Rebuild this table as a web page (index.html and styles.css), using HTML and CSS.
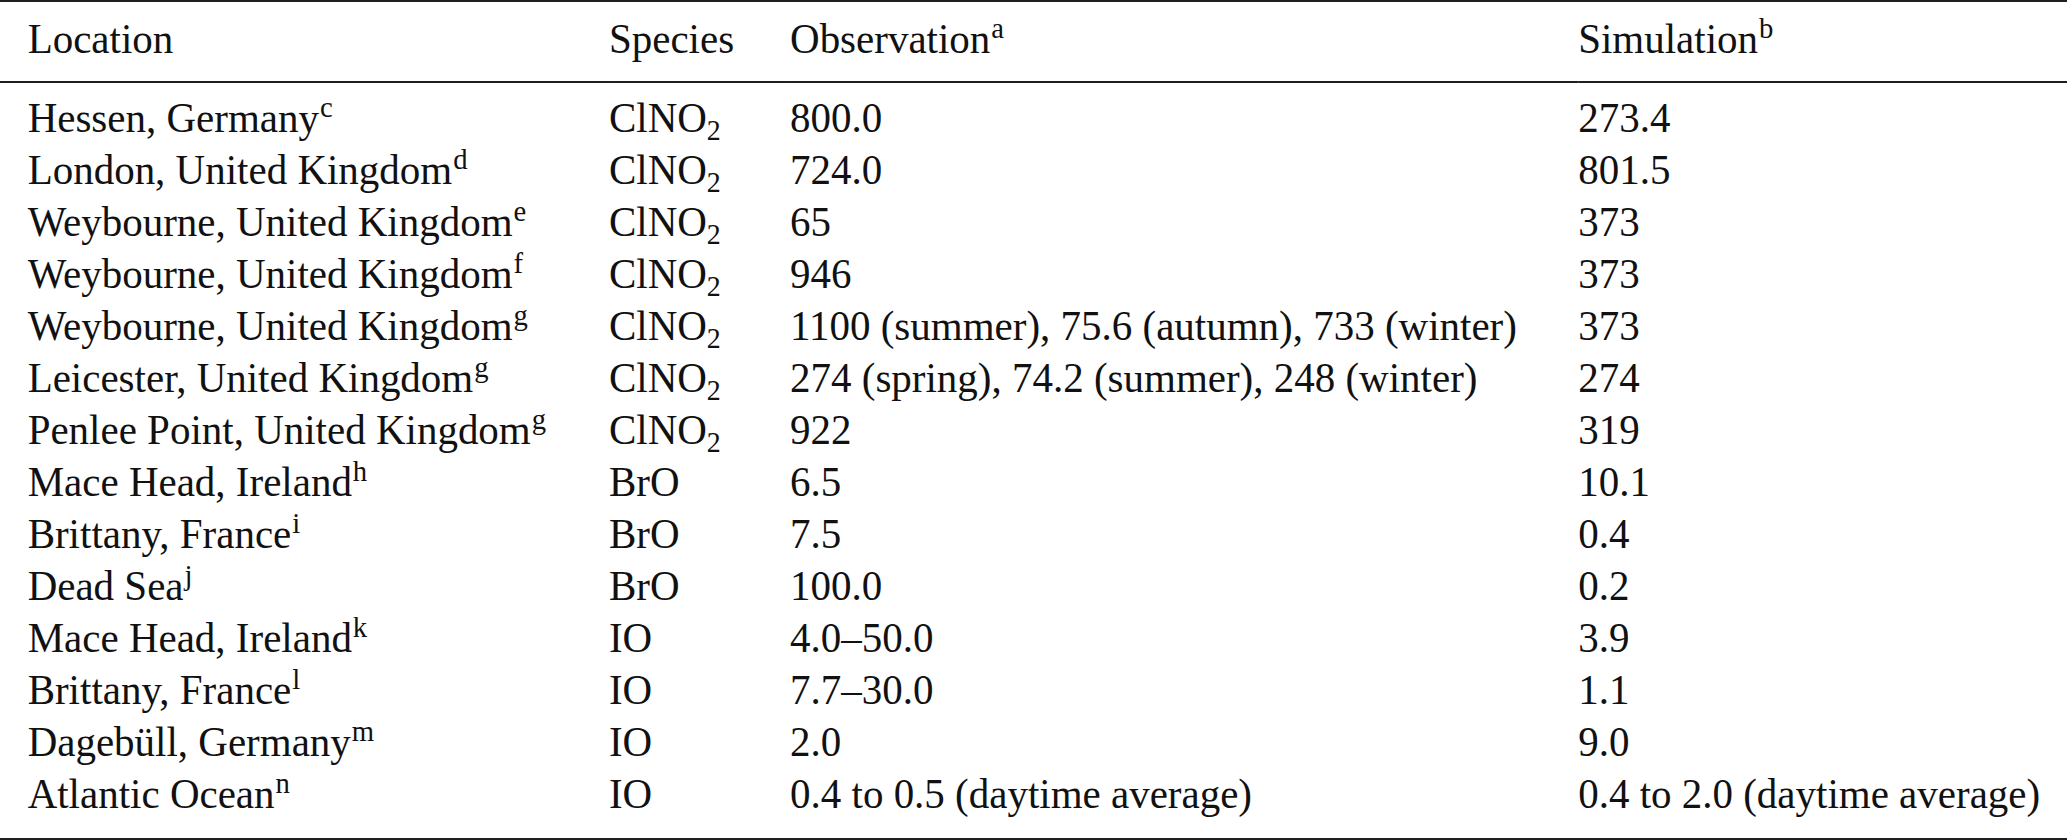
FILE: index.html
```html
<!DOCTYPE html>
<html lang="en">
<head>
<meta charset="utf-8">
<title>Halogen species observations and simulations</title>
<link rel="stylesheet" href="styles.css">
</head>
<body>
<div class="table-wrap">
<table class="data-table">
  <colgroup>
    <col class="col-location">
    <col class="col-species">
    <col class="col-observation">
    <col class="col-simulation">
  </colgroup>
  <thead>
    <tr>
      <th>Location</th>
      <th>Species</th>
      <th>Observation<span class="sup">a</span></th>
      <th>Simulation<span class="sup">b</span></th>
    </tr>
  </thead>
  <tbody>
    <tr class="first-row"><td>Hessen, Germany<span class="sup">c</span></td><td>ClNO<span class="sub">2</span></td><td>800.0</td><td>273.4</td></tr>
    <tr><td>London, United Kingdom<span class="sup">d</span></td><td>ClNO<span class="sub">2</span></td><td>724.0</td><td>801.5</td></tr>
    <tr><td>Weybourne, United Kingdom<span class="sup">e</span></td><td>ClNO<span class="sub">2</span></td><td>65</td><td>373</td></tr>
    <tr><td>Weybourne, United Kingdom<span class="sup">f</span></td><td>ClNO<span class="sub">2</span></td><td>946</td><td>373</td></tr>
    <tr><td>Weybourne, United Kingdom<span class="sup">g</span></td><td>ClNO<span class="sub">2</span></td><td>1100 (summer), 75.6 (autumn), 733 (winter)</td><td>373</td></tr>
    <tr><td>Leicester, United Kingdom<span class="sup">g</span></td><td>ClNO<span class="sub">2</span></td><td>274 (spring), 74.2 (summer), 248 (winter)</td><td>274</td></tr>
    <tr><td>Penlee Point, United Kingdom<span class="sup">g</span></td><td>ClNO<span class="sub">2</span></td><td>922</td><td>319</td></tr>
    <tr><td>Mace Head, Ireland<span class="sup">h</span></td><td>BrO</td><td>6.5</td><td>10.1</td></tr>
    <tr><td>Brittany, France<span class="sup">i</span></td><td>BrO</td><td>7.5</td><td>0.4</td></tr>
    <tr><td>Dead Sea<span class="sup">j</span></td><td>BrO</td><td>100.0</td><td>0.2</td></tr>
    <tr><td>Mace Head, Ireland<span class="sup">k</span></td><td>IO</td><td>4.0–50.0</td><td>3.9</td></tr>
    <tr><td>Brittany, France<span class="sup">l</span></td><td>IO</td><td>7.7–30.0</td><td>1.1</td></tr>
    <tr><td>Dagebüll, Germany<span class="sup">m</span></td><td>IO</td><td>2.0</td><td>9.0</td></tr>
    <tr class="last-row"><td>Atlantic Ocean<span class="sup">n</span></td><td>IO</td><td>0.4 to 0.5 (daytime average)</td><td>0.4 to 2.0 (daytime average)</td></tr>
  </tbody>
</table>
</div>
</body>
</html>
```

FILE: styles.css
```css
html, body {
  margin: 0;
  padding: 0;
  background: #ffffff;
}

body {
  font-family: "Liberation Serif", "Times New Roman", serif;
  font-size: 43px;
  line-height: 52px;
  color: #111111;
  overflow: hidden;
}

/* The source typeface is slightly condensed relative to Times;
   the whole table is narrowed horizontally to match it. */
.table-wrap {
  width: 100%;
  overflow: hidden;
}

.data-table {
  width: 2169px;
  table-layout: fixed;
  border-collapse: separate;
  border-spacing: 0;
  border-top: 2px solid #1e1e1e;
  border-bottom: 2px solid #1e1e1e;
  transform: scaleX(0.953);
  transform-origin: 0 0;
}

.col-location { width: 639px; }
.col-species { width: 190px; }
.col-observation { width: 827px; }
.col-simulation { width: auto; }

.data-table th,
.data-table td {
  padding: 0;
  text-align: left;
  font-weight: normal;
  white-space: nowrap;
  vertical-align: baseline;
  height: 52px;
}

.data-table th {
  padding-top: 11px;
  padding-bottom: 16px;
  border-bottom: 2px solid #1e1e1e;
}

.data-table th:first-child,
.data-table td:first-child {
  padding-left: 29px;
}

.data-table .first-row td {
  padding-top: 9px;
}

.data-table .last-row td {
  padding-bottom: 18px;
}

.sup {
  font-size: 0.7em;
  line-height: 0;
  vertical-align: 0.5em;
  margin-left: 1px;
}

.sub {
  font-size: 0.68em;
  line-height: 0;
  vertical-align: -0.27em;
}
```
